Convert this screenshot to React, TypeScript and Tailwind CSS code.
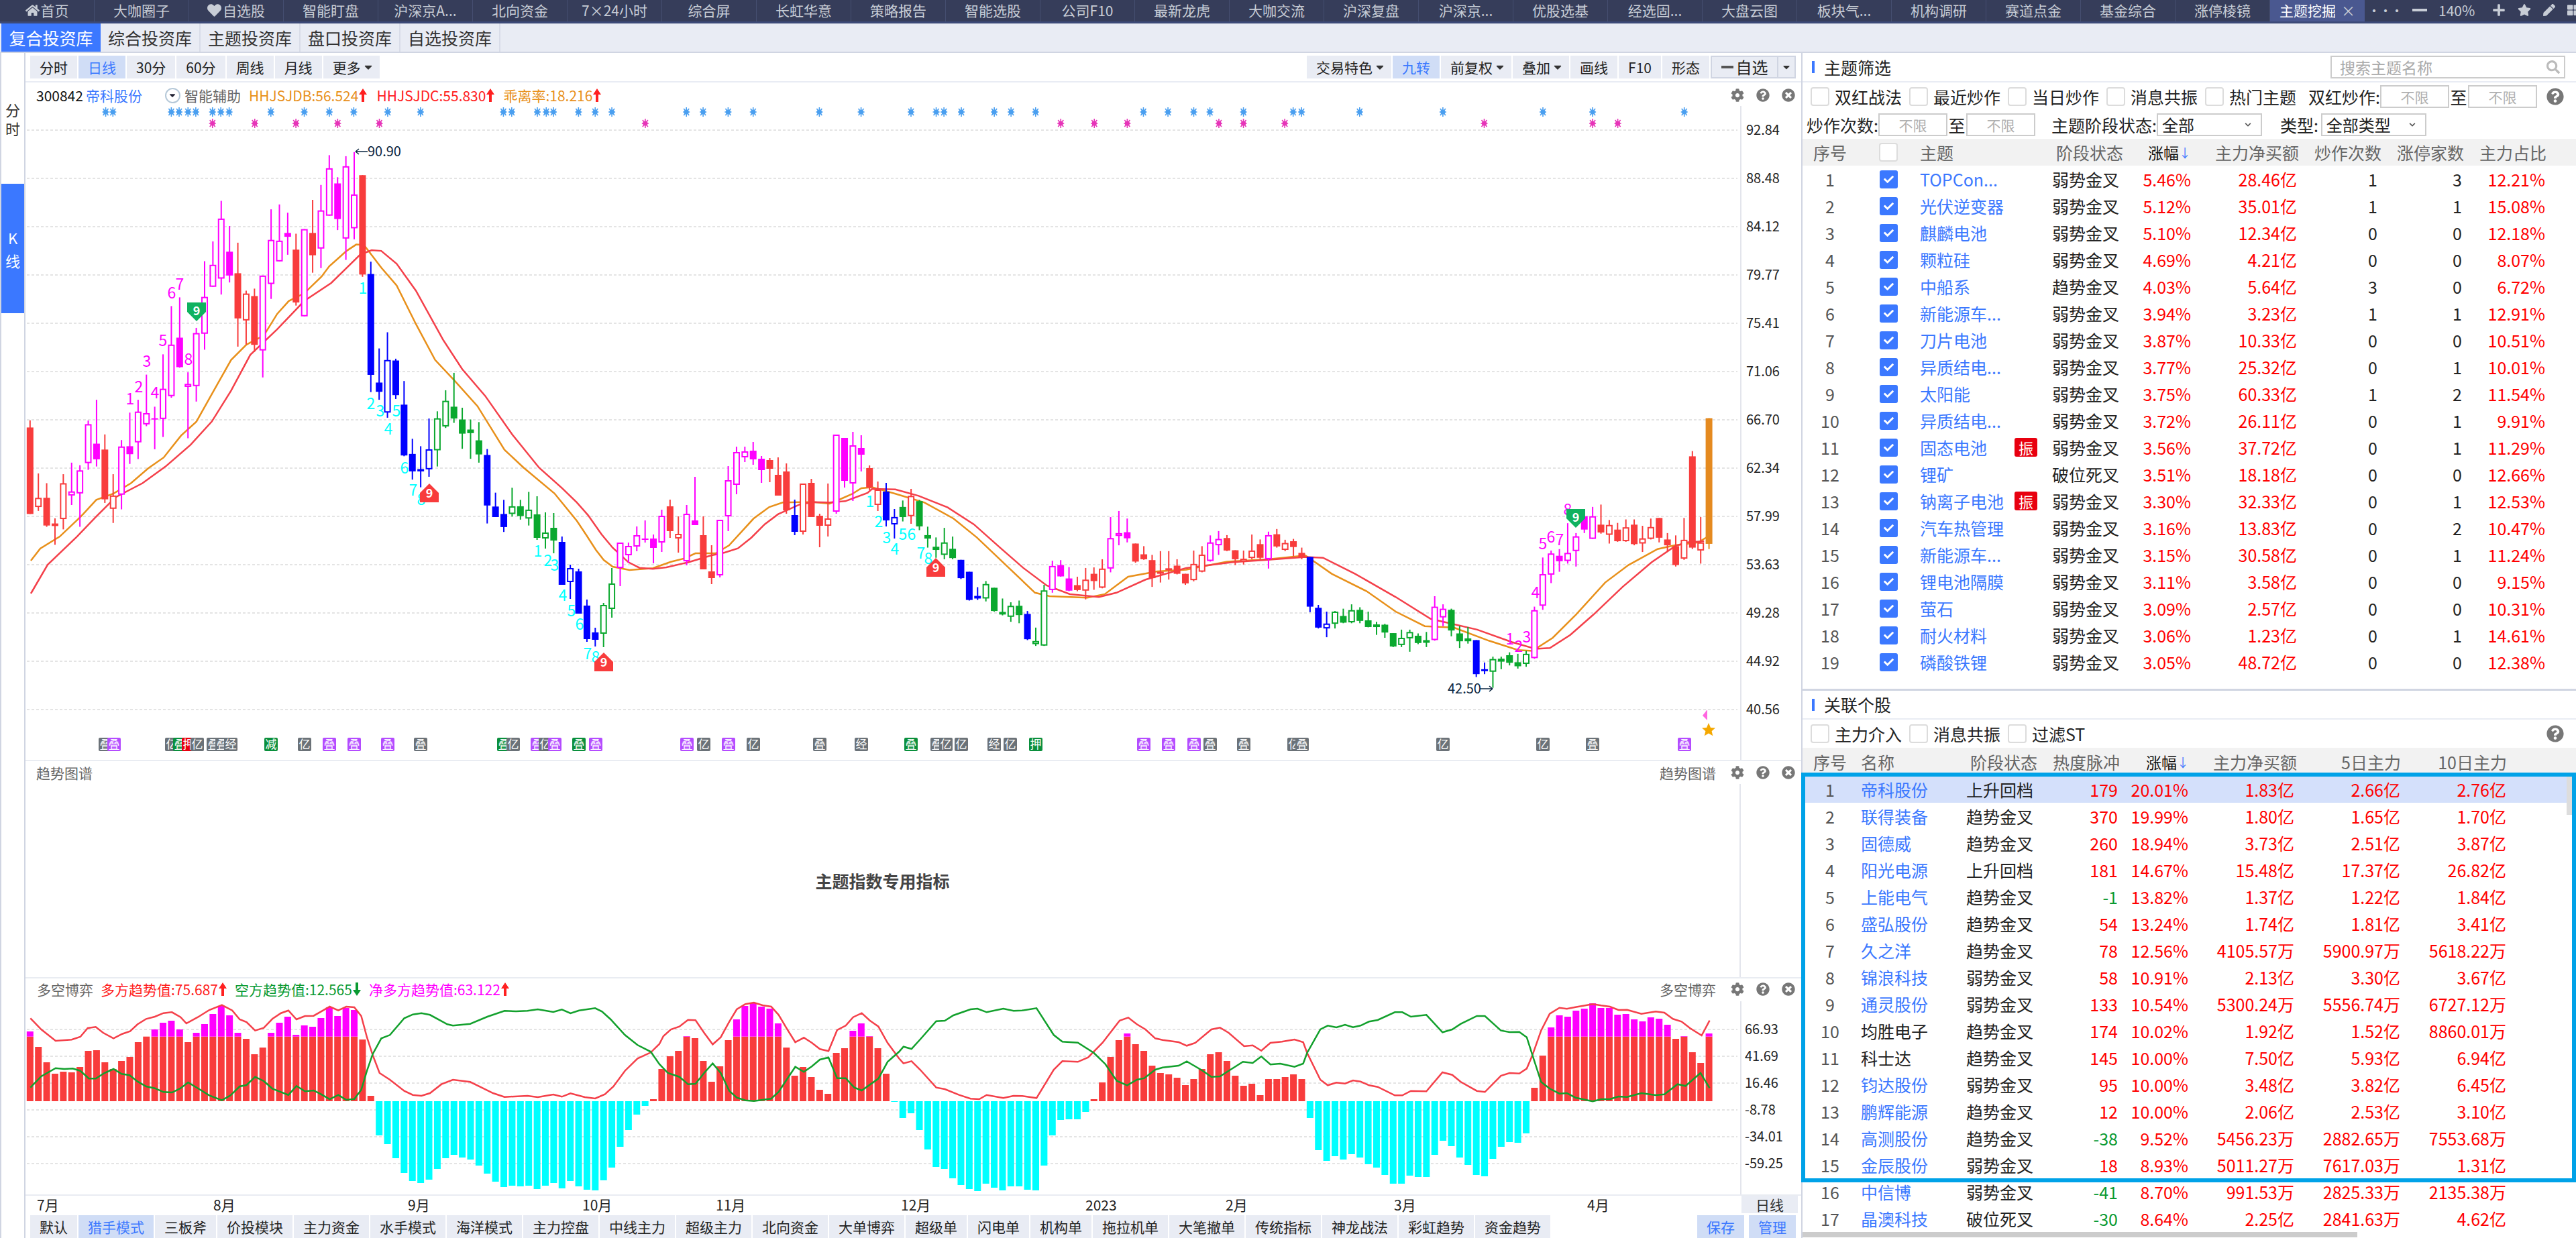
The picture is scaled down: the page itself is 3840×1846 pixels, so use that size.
import { FaCaretDown, FaCheck, FaChevronDown, FaCog, FaHeart, FaHome, FaPen, FaPlus, FaQuestionCircle, FaSearch, FaStar, FaThLarge, FaTimesCircle } from 'react-icons/fa';

const navItems = ['首页', '大咖圈子', '自选股', '智能盯盘', '沪深京A...', '北向资金', '7×24小时', '综合屏', '长虹华意', '策略报告', '智能选股', '公司F10', '最新龙虎', '大咖交流', '沪深复盘', '沪深京...', '优股选基', '经选固...', '大盘云图', '板块气...', '机构调研', '赛道点金', '基金综合', '涨停棱镜'];
const bottomTabs = ['默认', '猎手模式', '三板斧', '价投模块', '主力资金', '水手模式', '海洋模式', '主力控盘', '中线主力', '超级主力', '北向资金', '大单博弈', '超级单', '闪电单', '机构单', '拖拉机单', '大笔撤单', '传统指标', '神龙战法', '彩虹趋势', '资金趋势'];

// [序号不用存] 名称, 阶段, 涨幅, 净买额, 炒作, 涨停, 占比, 振
const themes: [string, string, string, string, string, string, string, boolean?][] = [
  ['TOPCon...', '弱势金叉', '5.46%', '28.46亿', '1', '3', '12.21%'],
  ['光伏逆变器', '弱势金叉', '5.12%', '35.01亿', '1', '1', '15.08%'],
  ['麒麟电池', '弱势金叉', '5.10%', '12.34亿', '0', '0', '12.18%'],
  ['颗粒硅', '弱势金叉', '4.69%', '4.21亿', '0', '0', '8.07%'],
  ['中船系', '趋势金叉', '4.03%', '5.64亿', '3', '0', '6.72%'],
  ['新能源车...', '弱势金叉', '3.94%', '3.23亿', '1', '1', '12.91%'],
  ['刀片电池', '弱势金叉', '3.87%', '10.33亿', '0', '0', '10.51%'],
  ['异质结电...', '弱势金叉', '3.77%', '25.32亿', '0', '1', '10.01%'],
  ['太阳能', '弱势金叉', '3.75%', '60.33亿', '1', '2', '11.54%'],
  ['异质结电...', '弱势金叉', '3.72%', '26.11亿', '0', '1', '9.91%'],
  ['固态电池', '弱势金叉', '3.56%', '37.72亿', '0', '1', '11.29%', true],
  ['锂矿', '破位死叉', '3.51%', '18.18亿', '0', '0', '12.66%'],
  ['钠离子电池', '弱势金叉', '3.30%', '32.33亿', '0', '1', '12.53%', true],
  ['汽车热管理', '弱势金叉', '3.16%', '13.83亿', '0', '2', '10.47%'],
  ['新能源车...', '弱势金叉', '3.15%', '30.58亿', '0', '1', '11.24%'],
  ['锂电池隔膜', '弱势金叉', '3.11%', '3.58亿', '0', '0', '9.15%'],
  ['萤石', '弱势金叉', '3.09%', '2.57亿', '0', '0', '10.31%'],
  ['耐火材料', '弱势金叉', '3.06%', '1.23亿', '0', '1', '14.61%'],
  ['磷酸铁锂', '弱势金叉', '3.05%', '48.72亿', '0', '0', '12.38%'],
];

const stocks: [string, string, string, string, string, string, string, boolean?][] = [
  ['帝科股份', '上升回档', '179', '20.01%', '1.83亿', '2.66亿', '2.76亿'],
  ['联得装备', '趋势金叉', '370', '19.99%', '1.80亿', '1.65亿', '1.70亿'],
  ['固德威', '趋势金叉', '260', '18.94%', '3.73亿', '2.51亿', '3.87亿'],
  ['阳光电源', '上升回档', '181', '14.67%', '15.48亿', '17.37亿', '26.82亿'],
  ['上能电气', '趋势金叉', '-1', '13.82%', '1.37亿', '1.22亿', '1.84亿'],
  ['盛弘股份', '趋势金叉', '54', '13.24%', '1.74亿', '1.81亿', '3.41亿'],
  ['久之洋', '趋势金叉', '78', '12.56%', '4105.57万', '5900.97万', '5618.22万'],
  ['锦浪科技', '弱势金叉', '58', '10.91%', '2.13亿', '3.30亿', '3.67亿'],
  ['通灵股份', '弱势金叉', '133', '10.54%', '5300.24万', '5556.74万', '6727.12万'],
  ['均胜电子', '趋势金叉', '174', '10.02%', '1.92亿', '1.52亿', '8860.01万', true],
  ['科士达', '趋势金叉', '145', '10.00%', '7.50亿', '5.93亿', '6.94亿', true],
  ['钧达股份', '弱势金叉', '95', '10.00%', '3.48亿', '3.82亿', '6.45亿'],
  ['鹏辉能源', '趋势金叉', '12', '10.00%', '2.06亿', '2.53亿', '3.10亿'],
  ['高测股份', '趋势金叉', '-38', '9.52%', '5456.23万', '2882.65万', '7553.68万'],
  ['金辰股份', '弱势金叉', '18', '8.93%', '5011.27万', '7617.03万', '1.31亿'],
  ['中信博', '弱势金叉', '-41', '8.70%', '991.53万', '2825.33万', '2135.38万'],
  ['晶澳科技', '破位死叉', '-30', '8.64%', '2.25亿', '2841.63万', '4.62亿'],
];

// 图表坐标都直接用整页像素
type Candle = [number, number, number, number, string];
const raw1: Candle[] = [
  [1115, 1143, 1480, 1480, 'R'], [1322, 1417, 1453, 1468, 'r'], [1360, 1417, 1525, 1530, 'R'], [1497, 1517, 1527, 1600, 'R'],
  [1325, 1360, 1500, 1540, 'r'], [1280, 1392, 1408, 1445, 'm'], [1290, 1310, 1400, 1530, 'm'], [1116, 1130, 1282, 1308, 'm'],
  [1035, 1206, 1267, 1295, 'M'], [1170, 1229, 1423, 1437, 'R'], [1325, 1408, 1460, 1515, 'r'], [1192, 1217, 1405, 1462, 'm'],
  [1085, 1216, 1247, 1285, 'M'], [1035, 1081, 1201, 1266, 'm'], [937, 1087, 1131, 1138, 'm'], [1062, 1107, 1112, 1228, 'M'],
  [858, 992, 1110, 1180, 'm'], [670, 820, 1021, 1027, 'm'], [636, 793, 908, 910, 'M'], [928, 973, 985, 1185, 'm'],
  [755, 775, 982, 1042, 'm'], [495, 634, 778, 840, 'm'], [418, 509, 595, 595, 'm'], [260, 329, 563, 625, 'm'],
  [358, 458, 551, 578, 'M'], [423, 542, 718, 828, 'R'], [610, 621, 726, 820, 'r'], [602, 631, 821, 848, 'R'],
  [551, 551, 843, 948, 'm'], [293, 412, 584, 642, 'm'], [274, 415, 496, 496, 'm'], [306, 385, 400, 470, 'M'],
  [388, 450, 656, 668, 'R'], [370, 370, 710, 710, 'm'], [256, 385, 472, 540, 'R'], [198, 297, 446, 522, 'm'],
  [82, 133, 318, 318, 'm'], [168, 192, 331, 374, 'M'], [86, 125, 407, 490, 'm'], [70, 235, 367, 410, 'm'],
  [160, 160, 547, 556, 'R'], [497, 545, 938, 1005, 'B'], [835, 968, 1004, 1035, 'B'], [772, 880, 1085, 1105, 'b'],
  [875, 882, 1017, 1032, 'B'], [962, 1054, 1252, 1255, 'B'], [1187, 1246, 1314, 1346, 'B'], [1216, 1305, 1314, 1376, 'B'],
  [1108, 1228, 1306, 1335, 'b'], [1080, 1107, 1232, 1295, 'g'], [998, 1039, 1139, 1145, 'g'], [930, 1062, 1108, 1125, 'G'],
  [1066, 1112, 1167, 1226, 'G'], [1112, 1151, 1165, 1265, 'G'], [1122, 1193, 1248, 1280, 'G'], [1227, 1250, 1447, 1517, 'B'],
  [1397, 1451, 1492, 1492, 'B'], [1425, 1480, 1531, 1550, 'B'], [1378, 1450, 1480, 1490, 'g'], [1425, 1450, 1488, 1502, 'G'],
  [1394, 1463, 1498, 1525, 'g'],
];
const raw2: Candle[] = [
  [740, 767, 802, 805, 'G'], [764, 794, 803, 818, 'g'], [765, 787, 806, 825, 'G'], [800, 808, 872, 872, 'B'], [842, 847, 868, 893, 'b'],
  [848, 852, 915, 915, 'B'], [894, 903, 953, 957, 'B'], [936, 943, 954, 964, 'B'], [899, 902, 945, 965, 'g'], [847, 870, 908, 921, 'g'],
  [809, 809, 847, 874, 'm'], [809, 814, 828, 839, 'm'], [785, 798, 815, 822, 'm'], [776, 803, 805, 809, 'M'], [797, 803, 817, 840, 'M'],
  [760, 769, 809, 823, 'm'], [745, 755, 792, 802, 'R'], [770, 796, 803, 824, 'r'], [753, 766, 837, 843, 'm'], [711, 776, 783, 783, 'M'],
  [770, 798, 849, 849, 'R'], [813, 852, 862, 871, 'R'], [775, 775, 858, 861, 'm'], [695, 716, 770, 792, 'm'], [666, 674, 723, 737, 'm'],
  [666, 673, 682, 689, 'm'], [659, 672, 685, 693, 'M'], [680, 684, 701, 720, 'M'], [683, 686, 699, 719, 'R'], [682, 708, 739, 739, 'R'],
  [691, 703, 761, 766, 'R'], [745, 768, 793, 798, 'B'], [721, 721, 793, 797, 'r'], [714, 720, 771, 771, 'R'], [766, 769, 784, 816, 'R'],
  [721, 773, 784, 800, 'r'], [648, 648, 763, 766, 'm'], [653, 653, 717, 727, 'M'], [644, 664, 721, 747, 'm'], [649, 668, 678, 703, 'M'],
  [694, 698, 727, 731, 'R'], [718, 730, 753, 762, 'r'], [720, 733, 776, 785, 'B'], [759, 771, 782, 803, 'b'],
];
const raw3: Candle[] = [
  [568, 590, 625, 640, 'G'], [528, 552, 622, 648, 'r'], [566, 570, 657, 670, 'G'], [658, 687, 699, 730, 'G'], [695, 727, 738, 765, 'G'],
  [662, 712, 755, 770, 'g'], [692, 734, 766, 770, 'G'], [772, 772, 835, 838, 'B'], [813, 813, 910, 912, 'B'], [866, 896, 905, 910, 'B'],
  [845, 855, 905, 915, 'g'], [868, 868, 948, 950, 'G'], [905, 951, 960, 963, 'G'], [918, 930, 968, 985, 'g'], [912, 930, 962, 990, 'G'],
  [948, 958, 1045, 1048, 'B'], [1005, 1051, 1062, 1068, 'g'], [858, 877, 1067, 1068, 'g'], [775, 793, 876, 885, 'm'], [773, 790, 829, 830, 'M'],
  [797, 836, 878, 880, 'M'], [830, 859, 876, 880, 'R'], [800, 840, 878, 908, 'r'], [798, 820, 845, 875, 'R'], [770, 802, 868, 870, 'r'],
  [625, 697, 802, 815, 'm'], [604, 680, 690, 722, 'm'], [630, 677, 698, 712, 'M'], [716, 716, 778, 782, 'R'], [725, 753, 770, 772, 'R'],
  [755, 773, 835, 865, 'R'], [742, 813, 820, 850, 'R'], [742, 801, 808, 840, 'R'], [770, 792, 820, 822, 'R'], [820, 820, 853, 858, 'R'],
  [740, 786, 842, 846, 'r'], [725, 754, 813, 815, 'r'], [688, 712, 776, 778, 'm'], [673, 700, 722, 755, 'm'], [687, 697, 740, 742, 'R'],
  [739, 739, 770, 790, 'R'], [740, 768, 778, 788, 'r'], [685, 740, 766, 770, 'r'], [702, 718, 765, 770, 'R'], [675, 687, 770, 802, 'm'],
  [666, 684, 726, 730, 'R'], [703, 714, 738, 742, 'r'], [700, 708, 728, 760, 'R'], [730, 748, 764, 770, 'R'], [762, 762, 933, 952, 'B'],
  [927, 937, 1005, 1008, 'B'], [950, 991, 1008, 1038, 'b'], [948, 950, 992, 1008, 'g'], [940, 965, 988, 990, 'G'], [925, 945, 987, 990, 'g'],
  [935, 944, 982, 990, 'G'], [950, 980, 1003, 1004, 'G'], [985, 994, 1003, 1030, 'g'], [992, 995, 1022, 1040, 'G'], [1024, 1024, 1070, 1072, 'G'],
  [1012, 1040, 1065, 1072, 'g'], [1012, 1020, 1042, 1088, 'g'], [1025, 1033, 1058, 1062, 'G'], [1020, 1048, 1052, 1072, 'g'], [897, 933, 1048, 1050, 'm'],
  [925, 940, 970, 1000, 'm'], [940, 944, 1015, 1035, 'G'], [1000, 1025, 1052, 1075, 'G'], [1003, 1042, 1052, 1060, 'G'], [1048, 1048, 1165, 1175, 'B'],
  [1125, 1148, 1155, 1165, 'B'], [1105, 1113, 1157, 1212, 'g'], [1105, 1112, 1122, 1148, 'G'], [1090, 1100, 1126, 1135, 'G'], [1095, 1124, 1138, 1146, 'G'],
  [1085, 1095, 1130, 1140, 'g'], [933, 945, 1110, 1112, 'm'], [764, 821, 930, 944, 'm'], [740, 750, 823, 852, 'm'], [735, 758, 777, 813, 'M'],
  [646, 748, 776, 785, 'm'], [680, 691, 742, 795, 'm'], [610, 622, 668, 680, 'M'], [590, 622, 700, 700, 'm'], [582, 651, 678, 682, 'R'],
  [635, 652, 686, 716, 'r'], [645, 668, 708, 710, 'R'], [633, 660, 708, 710, 'r'], [633, 651, 718, 722, 'R'], [655, 698, 716, 745, 'r'],
  [630, 659, 700, 702, 'r'], [628, 628, 696, 712, 'R'], [680, 702, 722, 745, 'R'], [688, 725, 790, 795, 'R'], [628, 703, 768, 772, 'r'],
  [398, 416, 730, 735, 'R'], [625, 712, 740, 785, 'r'], [285, 285, 717, 735, 'O'],
];
const y1 = (v: number) => 200 + v / 2.613;
const y3 = (v: number) => 500 + v / 2.306;
const candles: Candle[] = [
  ...raw1.map(([a, b, c, d, k]): Candle => [y1(a), y1(b), y1(c), y1(d), k]),
  ...raw2,
  ...raw3.map(([a, b, c, d, k]): Candle => [y3(a), y3(b), y3(c), y3(d), k]),
];
const candleX = (i: number) => 44.8 + 12.39 * i;
const candleColor: Record<string, string> = { r: '#f83c3c', m: '#ff00ff', b: '#0000ff', g: '#0aa82e', o: '#e58a1f' };

const toPts = (list: number[][], fx: (x: number) => number, fy: (y: number) => number) =>
  list.map(([x, y]) => `${fx(x).toFixed(1)},${fy(y).toFixed(1)}`).join(' ');

const maRed =
  '46,885 71,842 ' +
  toPts([[200, 1568], [250, 1490], [300, 1415], [370, 1360], [430, 1295], [495, 1210], [550, 1120], [600, 1000], [650, 860], [720, 760], [790, 650], [860, 580], [935, 470], [965, 452], [990, 455], [1030, 505], [1080, 610], [1150, 800], [1200, 915], [1260, 1020], [1330, 1170], [1400, 1300], [1460, 1380]], (x) => x / 1.742, y1) + ' ' +
  toPts([[0, 688], [50, 745], [110, 830], [160, 890], [230, 955], [280, 980], [340, 985], [400, 978], [500, 955], [600, 925], [660, 912], [720, 893], [780, 845], [840, 785], [900, 740], [1000, 695], [1060, 686], [1130, 688], [1200, 682], [1300, 645]], (x) => 860 + x / 3, (y) => 520 + y / 3) + ' ' +
  toPts([[0, 528], [40, 530], [80, 552], [130, 592], [175, 650], [220, 730], [260, 800], [300, 860], [340, 890], [390, 900], [420, 885], [470, 840], [540, 800], [620, 780], [680, 772], [745, 762], [775, 765], [830, 820], [900, 900], [960, 975], [1040, 1012], [1100, 1055], [1140, 1078], [1165, 1075], [1200, 1030], [1240, 960], [1290, 865], [1340, 780], [1380, 725], [1400, 712], [1430, 708]], (x) => 1300 + x / 1.153, y3);
const maOrange =
  '46,836 60,818 ' +
  toPts([[155, 1568], [210, 1490], [250, 1425], [295, 1400], [340, 1360], [385, 1302], [425, 1260], [470, 1175], [510, 1120], [555, 1000], [600, 880], [640, 820], [685, 785], [720, 700], [750, 650], [790, 620], [835, 555], [855, 515], [900, 455], [925, 430], [945, 432], [990, 520], [1030, 590], [1080, 740], [1130, 880], [1180, 960], [1240, 1060], [1310, 1230], [1360, 1300], [1440, 1400]], (x) => x / 1.742, y1) + ' ' +
  toPts([[0, 770], [40, 830], [85, 900], [120, 945], [160, 975], [235, 990], [340, 982], [420, 953], [480, 938], [530, 915], [560, 915], [620, 915], [680, 880], [790, 760], [860, 708], [920, 688], [1000, 686], [1060, 686], [1130, 693], [1180, 672], [1230, 650], [1272, 624]], (x) => 860 + x / 3, (y) => 520 + y / 3) + ' ' +
  toPts([[0, 522], [40, 545], [90, 575], [140, 630], [180, 695], [230, 790], [280, 885], [305, 897], [370, 902], [400, 890], [440, 830], [490, 812], [540, 806], [610, 778], [680, 770], [745, 757], [790, 820], [850, 880], [900, 950], [950, 1000], [1000, 1005], [1060, 1050], [1110, 1082], [1135, 1085], [1170, 1040], [1210, 960], [1260, 850], [1300, 790], [1350, 735], [1380, 722], [1420, 712], [1438, 690]], (x) => 1300 + x / 1.153, y3);

const priceTicks = ['92.84', '88.48', '84.12', '79.77', '75.41', '71.06', '66.70', '62.34', '57.99', '53.63', '49.28', '44.92', '40.56'];

// 九转数字 [文字, x, y]
const magentaNums: [string, number, number][] = [
  ['1', 194, 595], ['2', 207, 577], ['3', 219, 539], ['4', 231, 586], ['5', 243, 508], ['6', 256, 437], ['7', 268, 424], ['8', 281, 536],
  ['1', 2251, 953], ['2', 2264, 964], ['3', 2276, 950], ['4', 2289, 884], ['5', 2300, 811], ['6', 2312, 801], ['7', 2325, 805], ['8', 2337, 760],
];
const cyanNums: [string, number, number][] = [
  ['1', 541, 430], ['2', 553, 602], ['3', 567, 613], ['4', 579, 640], ['5', 591, 613], ['6', 603, 698], ['7', 616, 731], ['8', 628, 745],
  ['1', 802, 822], ['2', 817, 836], ['3', 827, 843], ['4', 839, 888], ['5', 852, 911], ['6', 864, 931], ['7', 876, 975], ['8', 888, 980],
  ['1', 1297, 748], ['2', 1310, 778], ['3', 1322, 802], ['4', 1334, 819], ['5', 1346, 797], ['6', 1359, 797], ['7', 1373, 825], ['8', 1384, 833],
];
const blueStars = [
  ...[190, 203, 308, 322, 338, 352, 382, 397, 412, 487, 547, 592, 636, 697, 756, 905, 920, 966, 982, 995, 1040, 1070, 1100, 1234, 1264, 1309, 1354, 1473, 1548].map((x) => x / 1.206),
  ...[65, 107, 120, 149, 204, 232, 273, 453, 494, 537, 564, 620, 703, 717, 814, 953, 1120, 1203, 1356].map((x) => 1300 + x / 1.12),
];
const pinkStars = [
  ...[382, 458, 532, 607, 682, 1160].map((x) => x / 1.206),
  ...[315, 371, 426, 579, 620, 689, 1022, 1203, 1245].map((x) => 1300 + x / 1.12),
];
// 底部小标记 [左边x, 字, 底色]
const GRAY = '#6b7278';
const PURPLE = '#b44cff';
const GREEN = '#0a8f3c';
const RED = '#e8000f';
const tags: [number, string, string][] = [
  [147, '叠', GRAY], [160, '叠', PURPLE], [246, '亿', GRAY], [258, '叠', GREEN], [271, '押', RED], [284, '亿', GRAY], [308, '叠', GRAY], [321, '叠', GRAY], [334, '经', GRAY],
  [394, '减', GREEN], [444, '亿', GRAY], [481, '叠', PURPLE], [518, '叠', PURPLE], [568, '叠', PURPLE], [617, '叠', GRAY], [741, '叠', GREEN], [755, '亿', GRAY], [791, '叠', PURPLE], [803, '亿', GRAY], [817, '叠', PURPLE],
  [853, '叠', GREEN], [878, '叠', PURPLE], [1014, '叠', PURPLE], [1039, '亿', GRAY], [1076, '叠', PURPLE], [1113, '亿', GRAY], [1212, '叠', GRAY], [1274, '经', GRAY],
  [1348, '叠', GREEN], [1387, '叠', GRAY], [1400, '亿', GRAY], [1423, '亿', GRAY], [1472, '经', GRAY], [1496, '亿', GRAY], [1534, '押', GREEN],
  [1695, '叠', PURPLE], [1732, '叠', PURPLE], [1770, '叠', PURPLE], [1794, '叠', GRAY], [1844, '叠', GRAY], [1919, '亿', GRAY], [1931, '叠', GRAY], [2141, '亿', GRAY], [2290, '亿', GRAY], [2364, '叠', GRAY], [2501, '叠', PURPLE],
];

// 多空博弈柱 (放大图里的 y, 606 是零轴)
const hist = [
  294, 363, 432, 483, 474, 477, 453, 381, 378, 432, 462, 426, 408, 342, 317, 285, 255, 246, 285, 342, 300, 261, 216, 180, 222, 300, 327, 396, 366, 300, 255, 228, 309, 267, 273, 234, 186, 225, 189, 198, 330, 582,
  759, 798, 861, 927, 963, 972, 957, 909, 861, 846, 858, 867, 894, 930, 966, 990, 984, 987, 984, 999, 984, 972, 996, 963, 987, 1002, 1005, 960, 903, 810, 735, 666, 627,
  597, 462, 405, 381, 315, 324, 426, 519, 450, 333, 240, 180, 168, 183, 192, 258, 366, 492, 453, 498, 555, 573, 390, 369, 291, 258, 315, 369, 483, 609,
  681, 660, 735, 822, 900, 909, 951, 981, 999, 1008, 975, 993, 1005, 987, 987, 1002, 1005, 894, 759, 690, 687, 687, 654,
  597, 522, 408, 333, 303, 351, 381, 447, 480, 486, 501, 534, 507, 462, 396, 387, 426, 492, 537, 528, 579, 507, 507, 498, 486, 507,
  681, 825, 873, 852, 867, 843, 858, 888, 903, 936, 975, 975, 939, 945, 945, 846, 783, 807, 858, 891, 936, 942, 864, 810, 789, 792, 750,
  546, 402, 276, 222, 228, 201, 192, 168, 189, 189, 219, 216, 240, 249, 231, 237, 264, 327, 315, 387, 435, 303,
];
const hy = (v: number) => 1440 + v / 3;
const xA = (x: number) => x / 1.17;
const xB = (x: number) => 1340 + x / 1.17;
const longRed =
  toPts([[53, 235], [72, 285], [97, 336], [125, 331], [140, 318], [153, 279], [167, 274], [180, 300], [198, 325], [213, 305], [227, 293], [240, 262], [255, 238], [270, 228], [285, 212], [300, 208], [315, 230], [325, 258], [345, 230], [365, 198], [387, 176], [405, 200], [418, 240], [430, 252], [445, 290], [460, 278], [475, 238], [490, 212], [503, 200], [517, 240], [532, 225], [547, 224], [560, 205], [575, 183], [590, 200], [604, 183], [618, 186], [630, 225], [640, 320], [650, 400], [662, 480], [680, 510], [705, 560], [720, 578], [735, 582], [750, 570], [770, 530], [790, 510], [820, 520], [840, 545], [860, 570], [880, 587], [920, 582], [938, 588], [965, 576], [980, 586], [995, 571], [1020, 588], [1038, 594], [1055, 575], [1070, 540], [1090, 470], [1112, 415], [1135, 388], [1150, 350], [1157, 315], [1170, 285], [1185, 272], [1200, 242], [1213, 244], [1228, 300], [1243, 352], [1257, 320], [1272, 250], [1285, 195], [1300, 172], [1315, 165], [1330, 177], [1345, 183], [1358, 220], [1372, 280], [1387, 342], [1402, 322], [1416, 345], [1430, 373], [1445, 382], [1460, 288], [1475, 268], [1488, 230], [1503, 212], [1517, 245], [1532, 272], [1548, 345], [1568, 415]], xA, hy) + ' ' +
  toPts([[8, 437], [22, 427], [37, 465], [65, 545], [80, 552], [105, 578], [125, 595], [140, 597], [153, 578], [182, 592], [200, 582], [215, 583], [240, 592], [270, 465], [285, 427], [312, 430], [330, 410], [355, 345], [385, 245], [400, 232], [415, 262], [430, 285], [447, 325], [460, 332], [488, 342], [502, 358], [517, 345], [545, 285], [560, 277], [575, 300], [602, 360], [617, 356], [632, 380], [648, 345], [668, 340], [690, 330], [705, 342], [712, 390], [735, 510], [748, 535], [763, 523], [778, 527], [792, 513], [805, 518], [820, 535], [835, 542], [865, 580], [878, 580], [893, 560], [920, 562], [948, 477], [965, 488], [980, 520], [1008, 560], [1022, 565], [1050, 492], [1065, 480], [1082, 482], [1095, 460], [1105, 400], [1120, 290], [1135, 215], [1152, 188], [1165, 193], [1180, 185], [1210, 172], [1225, 178], [1240, 183], [1255, 198], [1270, 197], [1295, 215], [1320, 205], [1335, 210], [1350, 238], [1365, 250], [1380, 280], [1400, 312], [1414, 245]], xB, hy);
const longGreen =
  toPts([[53, 545], [72, 495], [97, 458], [112, 462], [127, 460], [140, 470], [155, 505], [167, 505], [182, 480], [198, 462], [212, 484], [226, 490], [240, 518], [255, 540], [270, 548], [285, 565], [300, 567], [315, 548], [328, 522], [345, 548], [365, 580], [387, 602], [402, 580], [418, 540], [430, 534], [445, 497], [460, 516], [475, 550], [490, 565], [503, 578], [517, 538], [532, 562], [547, 558], [560, 575], [575, 597], [590, 578], [604, 600], [618, 596], [630, 555], [640, 470], [650, 395], [665, 325], [680, 310], [705, 235], [720, 218], [735, 212], [750, 220], [780, 262], [790, 268], [820, 260], [850, 228], [880, 202], [900, 204], [920, 202], [938, 195], [965, 207], [980, 196], [995, 213], [1010, 200], [1038, 190], [1050, 205], [1065, 240], [1090, 310], [1112, 355], [1135, 385], [1150, 440], [1165, 480], [1185, 497], [1200, 530], [1213, 528], [1228, 480], [1243, 437], [1257, 480], [1272, 560], [1285, 590], [1300, 602], [1315, 605], [1345, 595], [1358, 565], [1372, 510], [1387, 452], [1402, 475], [1416, 450], [1430, 420], [1445, 410], [1460, 503], [1475, 503], [1490, 545], [1503, 558], [1532, 505], [1548, 430], [1568, 385]], xA, hy) + ' ' +
  toPts([[8, 362], [22, 372], [37, 330], [65, 248], [80, 246], [95, 222], [125, 195], [137, 192], [153, 208], [182, 192], [200, 202], [215, 200], [240, 190], [270, 310], [285, 340], [312, 344], [340, 390], [360, 440], [380, 515], [398, 535], [415, 510], [428, 503], [447, 465], [460, 455], [488, 447], [502, 428], [530, 470], [545, 497], [560, 495], [575, 470], [600, 430], [617, 435], [632, 406], [648, 442], [665, 438], [690, 452], [705, 438], [712, 390], [735, 285], [748, 268], [763, 276], [778, 264], [792, 275], [805, 268], [820, 250], [835, 243], [865, 208], [878, 208], [893, 228], [920, 220], [948, 298], [965, 285], [980, 260], [1008, 225], [1022, 225], [1050, 290], [1065, 297], [1082, 296], [1095, 320], [1105, 400], [1120, 520], [1135, 550], [1152, 572], [1165, 570], [1180, 590], [1210, 607], [1225, 597], [1240, 597], [1255, 585], [1270, 587], [1295, 570], [1320, 579], [1335, 575], [1358, 530], [1372, 538], [1398, 480], [1414, 547]], xB, hy);
const histTicks: [string, number][] = [['66.93', 1535], ['41.69', 1575], ['16.46', 1615], ['-8.78', 1655], ['-34.01', 1695], ['-59.25', 1735]];
const months: [string, number][] = [['7月', 55], ['8月', 318], ['9月', 608], ['10月', 868], ['11月', 1067], ['12月', 1343], ['2023', 1618], ['2月', 1827], ['3月', 2078], ['4月', 2366]];

function Burst({ x, y, color }: { x: number; y: number; color: string }) {
  return (
    <g stroke={color} strokeWidth="1.6">
      <line x1={x - 5} y1={y} x2={x + 5} y2={y} />
      <line x1={x} y1={y - 7} x2={x} y2={y + 7} />
      <line x1={x - 4} y1={y - 5} x2={x + 4} y2={y + 5} />
      <line x1={x + 4} y1={y - 5} x2={x - 4} y2={y + 5} />
      <circle cx={x} cy={y} r="3.6" fill={color} stroke="none" />
    </g>
  );
}

function NineBadge({ x, y, down }: { x: number; y: number; down?: boolean }) {
  const d = down
    ? `M${x - 14} ${y - 13}H${x + 14}V${y + 1}L${x} ${y + 15}L${x - 14} ${y + 1}Z`
    : `M${x} ${y - 15}L${x + 14} ${y - 1}V${y + 13}H${x - 14}V${y - 1}Z`;
  return (
    <g>
      <path d={d} fill={down ? '#0fb25f' : '#f83c3c'} />
      <text x={x} y={y + 6} textAnchor="middle" fontSize="18" fontWeight="700" fill="#fff">9</text>
    </g>
  );
}

function UpArrow({ down, color = '#ff2020' }: { down?: boolean; color?: string }) {
  return (
    <svg viewBox="0 0 12 20" className="w-[12px] h-[20px] ml-[1px] shrink-0">
      <path d={down ? 'M4 0h4v11h4L6 20 0 11h4z' : 'M6 0l6 9H8v11H4V9H0z'} fill={color} />
    </svg>
  );
}

function PanelIcons() {
  return (
    <div className="flex items-center gap-[18px] text-[#777] text-[20px]">
      <FaCog />
      <FaQuestionCircle />
      <FaTimesCircle />
    </div>
  );
}

function ToolBtn({ label, active, caret }: { label: string; active?: boolean; caret?: boolean }) {
  return (
    <div className={`h-[34px] px-[14px] flex items-center text-[21px] leading-none ${active ? 'bg-[#d0ddf6] text-[#3b78ff]' : 'bg-[#e9ecf4] text-[#222]'}`}>
      {label}
      {caret && <FaCaretDown className="ml-[2px] -mr-[6px] text-[18px] text-[#333]" />}
    </div>
  );
}

function CheckBox({ checked }: { checked?: boolean }) {
  return checked ? (
    <div className="w-[27px] h-[27px] rounded-[3px] bg-[#3b78ff] flex items-center justify-center text-white text-[15px]">
      <FaCheck />
    </div>
  ) : (
    <div className="w-[28px] h-[28px] rounded-[4px] border-2 border-[#dcdcdc] bg-white" />
  );
}

function CheckLabel({ label }: { label: string }) {
  return (
    <div className="flex items-center gap-[8px] w-[136px] whitespace-nowrap">
      <CheckBox />
      {label}
    </div>
  );
}

function RangeInput() {
  return <input readOnly placeholder="不限" className="w-[103px] h-[34px] border-2 border-[#ccc] text-center text-[21px] placeholder:text-[#b0b0b0] outline-none" />;
}

function SelectBox({ label }: { label: string }) {
  return (
    <div className="w-[157px] h-[34px] border-2 border-[#ccc] flex items-center justify-between pl-[6px] pr-[14px] text-[24px]">
      {label}
      <FaChevronDown className="text-[10px] text-[#555]" />
    </div>
  );
}

function SectionTitle({ label }: { label: string }) {
  return (
    <div className="flex items-center gap-[14px] pl-[14px]">
      <div className="w-[4px] h-[18px] bg-[#3b78ff]" />
      {label}
    </div>
  );
}

function SortHead() {
  return (
    <span className="text-[#111] text-[23px] flex items-center justify-end">
      涨幅
      <span className="text-[#3b78ff] text-[18px] leading-none">↓</span>
    </span>
  );
}

function ThemeTable() {
  return (
    <div>
      <div className="flex items-center h-[40px] bg-[#f2f2f2] text-[#666]">
        <div className="w-[82px] text-center">序号</div>
        <div className="w-[93px] pl-[32px]"><CheckBox /></div>
        <div className="w-[203px]">主题</div>
        <div className="w-[115px]">阶段状态</div>
        <div className="w-[86px]"><SortHead /></div>
        <div className="w-[161px] text-right whitespace-nowrap">主力净买额</div>
        <div className="w-[123px] text-right">炒作次数</div>
        <div className="w-[123px] text-right">涨停家数</div>
        <div className="w-[123px] text-right">主力占比</div>
      </div>
      {themes.map((t, i) => (
        <div key={i} className="flex items-center h-[40px]">
          <div className="w-[82px] text-center text-[#555]">{i + 1}</div>
          <div className="w-[93px] pl-[33px]"><CheckBox checked /></div>
          <div className="w-[197px] flex items-center text-[#3b78ff] whitespace-nowrap">
            <span className="w-[141px]">{t[0]}</span>
            {t[7] && <span className="w-[34px] h-[28px] bg-[#e8000f] text-white text-[22px] flex items-center justify-center rounded-[3px]">振</span>}
          </div>
          <div className="w-[121px] text-[#222]">{t[1]}</div>
          <div className="w-[86px] text-right text-[#f00]">{t[2]}</div>
          <div className="w-[158px] text-right text-[#f00]">{t[3]}</div>
          <div className="w-[120px] text-right text-[#222]">{t[4]}</div>
          <div className="w-[126px] text-right text-[#222]">{t[5]}</div>
          <div className="w-[124px] text-right text-[#f00]">{t[6]}</div>
        </div>
      ))}
    </div>
  );
}

function StockTable() {
  return (
    <div className="relative">
      <div className="flex items-center h-[42px] bg-[#f2f2f2] text-[#666]">
        <div className="w-[82px] text-center">序号</div>
        <div className="w-[168px] pl-[5px]">名称</div>
        <div className="w-[123px]">阶段状态</div>
        <div className="w-[100px] whitespace-nowrap">热度脉冲</div>
        <div className="w-[103px]"><SortHead /></div>
        <div className="w-[161px] text-right whitespace-nowrap">主力净买额</div>
        <div className="w-[155px] text-right">5日主力</div>
        <div className="w-[158px] text-right">10日主力</div>
      </div>
      {stocks.map((s, i) => (
        <div key={i} className={`flex items-center h-[40px] ${i === 0 ? 'bg-[#d4e0fb]' : ''}`}>
          <div className="w-[82px] text-center text-[#555]">{i + 1}</div>
          <div className={`w-[162px] pl-[5px] ${s[7] ? 'text-[#222]' : 'text-[#3b78ff]'}`}>{s[0]}</div>
          <div className="w-[129px] text-[#222]">{s[1]}</div>
          <div className={`w-[97px] text-right ${s[2].startsWith('-') ? 'text-[#0a9a32]' : 'text-[#f00]'}`}>{s[2]}</div>
          <div className="w-[105px] text-right text-[#f00]">{s[3]}</div>
          <div className="w-[158px] text-right text-[#f00]">{s[4]}</div>
          <div className="w-[158px] text-right text-[#f00]">{s[5]}</div>
          <div className="w-[158px] text-right text-[#f00]">{s[6]}</div>
        </div>
      ))}
      <div className="h-[8px] w-[827px] bg-[#ccc]" />
      <div className="absolute right-[2px] top-[42px] w-[12px] h-[58px] bg-[#ddd]" />
      <div className="absolute left-[-2px] right-0 top-[37px] h-[611px] border-[6px] border-[#00a2e8] pointer-events-none" />
    </div>
  );
}

function PriceChart() {
  return (
    <svg viewBox="38 123 2647 1010" className="absolute inset-0 w-full h-full">
      {priceTicks.map((t, i) => {
        const y = 194 + 72 * i;
        return (
          <g key={t}>
            <line x1="40" y1={y} x2="2590" y2={y} stroke="#dcdcdc" strokeWidth="1.5" strokeDasharray="4 3" />
            <text x="2603" y={y + 7} fontSize="20" fill="#222">{t}</text>
          </g>
        );
      })}
      <line x1="2595" y1="158" x2="2595" y2="1133" stroke="#e3e5ec" strokeWidth="2" />
      {blueStars.map((x, i) => <Burst key={i} x={x} y={167} color="#4a9ff0" />)}
      {pinkStars.map((x, i) => <Burst key={i} x={x} y={184} color="#e633b8" />)}
      <polyline points={maOrange} fill="none" stroke="#e8901a" strokeWidth="2.5" />
      <polyline points={maRed} fill="none" stroke="#f4404a" strokeWidth="2.5" />
      {candles.map(([hi, top, bot, lo, kind], i) => {
        const x = candleX(i);
        const filled = kind === kind.toUpperCase();
        const color = candleColor[kind.toLowerCase()];
        return (
          <g key={i}>
            <line x1={x} y1={hi} x2={x} y2={lo} stroke={color} strokeWidth="2" />
            {filled ? (
              <rect x={x - 5} y={top} width="10" height={Math.max(bot - top, 2)} fill={color} />
            ) : (
              <rect x={x - 4} y={top + 1} width="8" height={Math.max(bot - top - 2, 2)} fill="#fff" stroke={color} strokeWidth="2" />
            )}
          </g>
        );
      })}
      {magentaNums.map(([t, x, y], i) => <text key={i} x={x} y={y + 8} textAnchor="middle" fontSize="23" fill="#ff00ff">{t}</text>)}
      {cyanNums.map(([t, x, y], i) => <text key={i} x={x} y={y + 8} textAnchor="middle" fontSize="23" fill="#00ffff">{t}</text>)}
      <NineBadge x={293} y={464} down />
      <NineBadge x={640} y={736} />
      <NineBadge x={900} y={988} />
      <NineBadge x={1395} y={847} />
      <NineBadge x={2349} y={772} down />
      <path d="M548 226H530M530 226l5-4M530 226l5 4" stroke="#0a2540" strokeWidth="1.5" fill="none" />
      <text x="548" y="233" fontSize="20" fill="#0a2540">90.90</text>
      <text x="2158" y="1034" fontSize="20" fill="#0a2540">42.50</text>
      <path d="M2206 1027H2225M2225 1027l-5-4M2225 1027l-5 4" stroke="#0a2540" strokeWidth="1.5" fill="none" />
      {tags.map(([x, t, bg], i) => (
        <g key={i}>
          <rect x={x} y="1100" width="20" height="20" rx="2" fill={bg} />
          <text x={x + 10} y="1116" textAnchor="middle" fontSize="17" fill="#fff">{t}</text>
        </g>
      ))}
      <path d="M2545 1058V1074L2538 1067Z" fill="#ff66e0" />
      <path d="M2547 1078l3 7 7 .6-5.400 4.600 1.700 7-6.300-3.800-6.300 3.800 1.700-7-5.400-4.600 7-.6z" fill="#f5a800" />
    </svg>
  );
}

function HistChart() {
  return (
    <svg viewBox="38 1459 2647 322" className="absolute inset-0 w-full h-full">
      {histTicks.map(([t, y]) => (
        <g key={t}>
          <line x1="40" y1={y} x2="2590" y2={y} stroke="#dcdcdc" strokeWidth="1.5" strokeDasharray="4 3" />
          <text x="2601" y={y + 7} fontSize="20" fill="#222">{t}</text>
        </g>
      ))}
      <line x1="2595" y1="1493" x2="2595" y2="1781" stroke="#e3e5ec" strokeWidth="2" />
      {hist.map((v, i) => {
        const x = candleX(i) - 5;
        if (v > 606) return <rect key={i} x={x} y={hy(606)} width="10" height={(v - 606) / 3} fill="#00ffff" />;
        const split = Math.max(v, 317);
        return (
          <g key={i}>
            <rect x={x} y={hy(split)} width="10" height={(606 - split) / 3} fill="#f83c3c" />
            {v < 317 && <rect x={x} y={hy(v)} width="10" height={(317 - v) / 3} fill="#ff00ff" />}
          </g>
        );
      })}
      <polyline points={longRed} fill="none" stroke="#f4404a" strokeWidth="2.5" />
      <polyline points={longGreen} fill="none" stroke="#12a02c" strokeWidth="2.5" />
    </svg>
  );
}

export default function App() {
  return (
    <div className="w-[3840px] h-[1846px] overflow-hidden bg-white flex flex-col font-['Noto_Sans_CJK_SC','Noto_Sans',sans-serif]">
      {/* 顶部导航 */}
      <div className="h-[35px] shrink-0 flex bg-[#363d5a] border-b-[3px] border-[#3c4a78] text-[21px] text-[#c8cdd6] leading-none">
        {navItems.map((n) => (
          <div key={n} className="w-[141px] h-[32px] pb-[2px] shrink-0 flex items-center justify-center gap-[2px] border-r border-[#454e70] whitespace-nowrap">
            {n === '首页' && <FaHome className="text-[#c8cdd6]" />}
            {n === '自选股' && <FaHeart className="text-[#c8cdd6]" />}
            {n}
          </div>
        ))}
        <div className="w-[141px] h-[32px] pb-[2px] shrink-0 flex items-center justify-center gap-[8px] bg-[#4a5890] text-white whitespace-nowrap">
          主题挖掘<span className="text-[#c8cdd6]">×</span>
        </div>
        <div className="flex-1 h-[32px] pb-[2px] flex items-center text-[#c8cdd6]">
          <span className="ml-[6px] tracking-[1px] text-[16px] font-bold">•••</span>
          <span className="ml-[14px] w-[22px] h-[4px] bg-[#c8cdd6]" />
          <span className="ml-[17px]">140%</span>
          <FaPlus className="ml-[26px] text-[20px]" />
          <FaStar className="ml-[18px] text-[20px]" />
          <FaPen className="ml-[18px] text-[18px]" />
          <FaThLarge className="ml-[18px] text-[18px]" />
        </div>
      </div>

      {/* 投资库标签 */}
      <div className="h-[44px] shrink-0 flex bg-[#e9ecf4] border-b-2 border-[#d0d5e2] pl-[2px] text-[25px] text-[#333] leading-none">
        <div className="w-[148px] flex items-center justify-center bg-[#3b78ff] text-white">复合投资库</div>
        {['综合投资库', '主题投资库', '盘口投资库', '自选投资库'].map((t) => (
          <div key={t} className="w-[149px] flex items-center justify-center border-r-2 border-[#d8dce8]">{t}</div>
        ))}
      </div>

      <div className="flex-1 flex min-h-0">
        {/* 左侧 */}
        <div className="w-[38px] shrink-0 flex flex-col border-l-2 border-r-2 border-[#d0d5e2] text-[22px] text-[#333]">
          <div className="h-[195px] flex items-center justify-center text-center leading-[28px]">分<br />时</div>
          <div className="h-[193px] bg-[#3b78ff] text-white flex items-center justify-center text-center leading-[34px]">K<br />线</div>
        </div>

        {/* 图表区 */}
        <div className="w-[2647px] shrink-0 flex flex-col">
          <div className="h-[44px] shrink-0 flex items-start pt-[4px] pl-[7px] pr-[8px] gap-[2px] border-b-2 border-[#e9ecf4]">
            {['分时', '日线', '30分', '60分', '周线', '月线'].map((t) => <ToolBtn key={t} label={t} active={t === '日线'} />)}
            <ToolBtn label="更多" caret />
            <div className="flex-1" />
            <ToolBtn label="交易特色" caret />
            <ToolBtn label="九转" active />
            <ToolBtn label="前复权" caret />
            <ToolBtn label="叠加" caret />
            <ToolBtn label="画线" />
            <ToolBtn label="F10" />
            <ToolBtn label="形态" />
            <div className="h-[34px] flex border-2 border-[#d0d5e2] bg-[#e9ecf4] text-[24px] leading-none text-[#222]">
              <div className="w-[97px] flex items-center justify-center gap-[4px]"><span className="w-[18px] h-[4px] bg-[#555]" />自选</div>
              <div className="w-[26px] flex items-center justify-center border-l-2 border-[#d0d5e2]"><FaCaretDown className="text-[16px] text-[#333]" /></div>
            </div>
          </div>

          {/* K线 */}
          <div className="relative h-[1010px] shrink-0">
            <PriceChart />
            <div className="relative flex items-center h-[38px] pl-[16px] pr-[9px] text-[21px] leading-none whitespace-nowrap">
              <span className="text-[#111]">300842</span>
              <span className="ml-[4px] text-[#3b78ff]">帝科股份</span>
              <span className="ml-[34px] w-[23px] h-[23px] rounded-full border-2 border-[#b5c8d8] flex items-center justify-center"><FaCaretDown className="text-[14px] text-[#223]" /></span>
              <span className="ml-[6px] text-[#666]">智能辅助</span>
              <span className="ml-[12px] text-[#e8901a]">HHJSJDB:56.524</span><UpArrow />
              <span className="ml-[14px] text-[#ff2020]">HHJSJDC:55.830</span><UpArrow />
              <span className="ml-[13px] text-[#e8901a]">乖离率:18.216</span><UpArrow />
              <div className="ml-auto"><PanelIcons /></div>
            </div>
          </div>
          <div className="h-[2px] shrink-0 bg-[#e9ecf2]" />

          {/* 趋势图谱 */}
          <div className="h-[322px] shrink-0 flex flex-col text-[21px] leading-none text-[#666]">
            <div className="h-[34px] flex items-center justify-between pl-[16px] pr-[9px]">
              趋势图谱
              <div className="flex items-center gap-[22px]">趋势图谱<PanelIcons /></div>
            </div>
            <div className="flex-1 flex">
              <div className="w-[2557px] border-r-2 border-[#e3e5ec] flex items-center justify-center text-[25px] font-bold text-[#444]">主题指数专用指标</div>
            </div>
          </div>
          <div className="h-[2px] shrink-0 bg-[#e9ecf2]" />

          {/* 多空博弈 */}
          <div className="relative h-[322px] shrink-0">
            <HistChart />
            <div className="relative flex items-center h-[32px] pl-[17px] pr-[9px] text-[21px] leading-none whitespace-nowrap">
              <span className="text-[#666]">多空博弈</span>
              <span className="ml-[11px] text-[#ff2020]">多方趋势值:75.687</span><UpArrow />
              <span className="ml-[12px] text-[#0a9a32]">空方趋势值:12.565</span><UpArrow down color="#0a9a32" />
              <span className="ml-[12px] text-[#ff00ff]">净多方趋势值:63.122</span><UpArrow />
              <div className="ml-auto flex items-center gap-[22px] text-[#666]">多空博弈<PanelIcons /></div>
            </div>
          </div>
          <div className="h-[2px] shrink-0 bg-[#e9ecf2]" />

          {/* 日期轴 */}
          <div className="relative h-[29px] shrink-0 flex justify-end pr-[5px]">
            <svg viewBox="38 1783 2647 29" className="absolute inset-0 w-full h-full">
              {months.map(([t, x]) => <text key={t} x={x} y="1805" fontSize="21" fill="#222">{t}</text>)}
            </svg>
            <div className="relative w-[84px] h-[26px] bg-[#e9ecf4] flex items-center justify-center text-[21px] leading-none text-[#333]">日线</div>
          </div>

          {/* 底部模式 */}
          <div className="h-[34px] shrink-0 flex pl-[7px] pr-[8px] gap-[2px]">
            {bottomTabs.map((t) => <ToolBtn key={t} label={t} active={t === '猎手模式'} />)}
            <div className="flex-1" />
            <div className="flex gap-[7px]">
              <ToolBtn label="保存" active />
              <ToolBtn label="管理" active />
            </div>
          </div>
        </div>

        {/* 右侧 */}
        <div className="flex-1 min-w-0 border-l-2 border-[#d0d5e2] text-[25px] leading-none text-[#222] flex flex-col">
          <div className="h-[44px] shrink-0 flex items-center justify-between pr-[16px] border-b-2 border-[#e9ecf4]">
            <SectionTitle label="主题筛选" />
            <div className="w-[350px] h-[34px] border-2 border-[#ccc] flex items-center justify-between pl-[12px] pr-[6px] text-[23px] text-[#aaa]">
              搜索主题名称
              <FaSearch className="text-[20px] text-[#bbb]" />
            </div>
          </div>
          <div className="h-[42px] shrink-0 flex items-center pl-[12px] gap-[11px] whitespace-nowrap">
            <CheckLabel label="双红战法" />
            <CheckLabel label="最近炒作" />
            <CheckLabel label="当日炒作" />
            <CheckLabel label="消息共振" />
            <CheckLabel label="热门主题" />
            <div className="ml-[7px] flex items-center">
              双红炒作:<RangeInput /><span className="w-[28px] text-center">至</span><RangeInput />
            </div>
            <FaQuestionCircle className="ml-[3px] text-[#777] text-[26px]" />
          </div>
          <div className="h-[42px] shrink-0 flex items-center pl-[6px] whitespace-nowrap">
            炒作次数:<RangeInput /><span className="w-[28px] text-center">至</span><RangeInput />
            <span className="ml-[24px]">主题阶段状态:</span><SelectBox label="全部" />
            <span className="ml-[27px] mr-[4px]">类型:</span><SelectBox label="全部类型" />
          </div>
          <div className="h-[820px] shrink-0"><ThemeTable /></div>
          <div className="h-[3px] shrink-0 bg-[#d0d5e2]" />
          <div className="h-[43px] shrink-0 flex items-center border-b-2 border-[#e9ecf4]">
            <SectionTitle label="关联个股" />
          </div>
          <div className="h-[42px] shrink-0 flex items-center pl-[12px] gap-[11px] pr-[18px] whitespace-nowrap">
            <CheckLabel label="主力介入" />
            <CheckLabel label="消息共振" />
            <CheckLabel label="过滤ST" />
            <FaQuestionCircle className="ml-auto text-[#777] text-[26px]" />
          </div>
          <StockTable />
        </div>
      </div>
    </div>
  );
}
